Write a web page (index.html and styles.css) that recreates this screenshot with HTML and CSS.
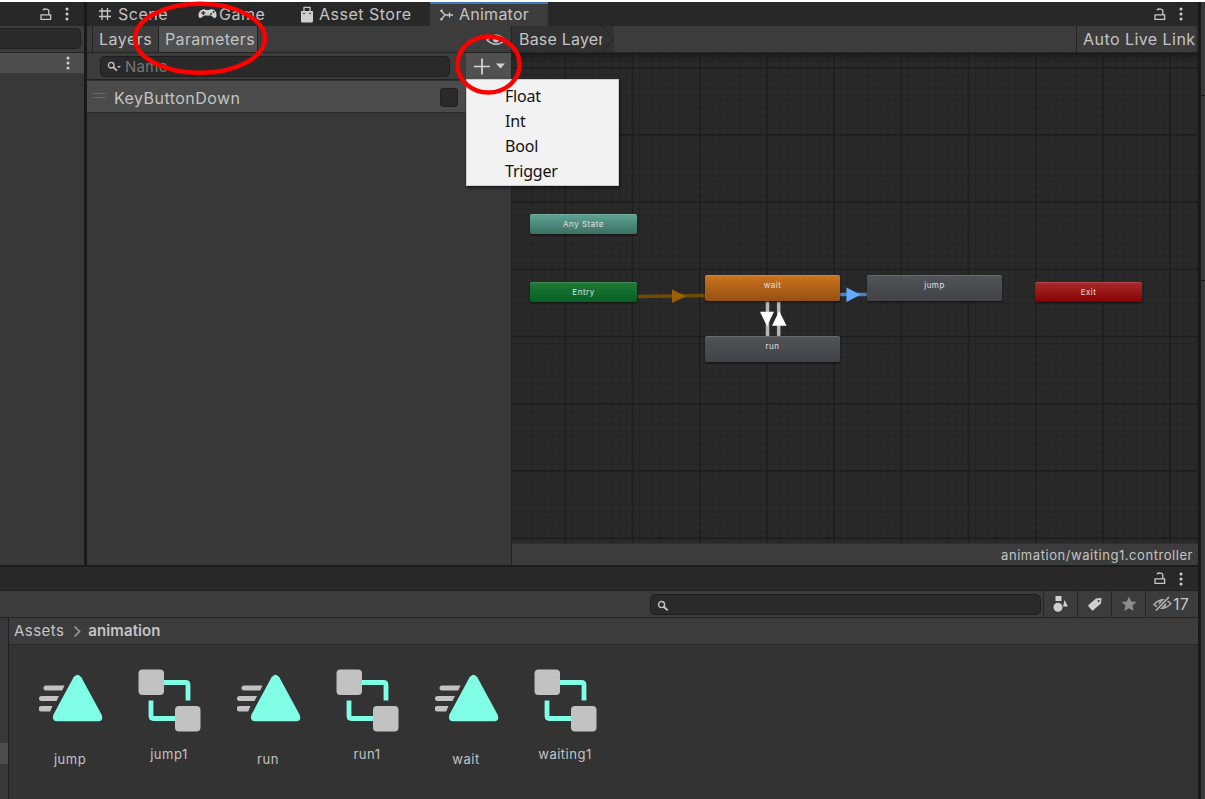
FILE: index.html
```html
<!DOCTYPE html>
<html lang="en">
<head>
<meta charset="utf-8">
<title>Animator</title>
<link rel="stylesheet" href="styles.css">
</head>
<body>
<svg class="defs" width="0" height="0">
  <defs>
    <symbol id="lock" viewBox="0 0 12 13"><path d="M1 6.8h9.6v4.6H1zM2.8 2.2C4 .8 8.8.2 8.8 3v3.8" fill="none" stroke="#c8c8c8" stroke-width="1.3"/></symbol>
    <symbol id="dots" viewBox="0 0 4 14"><circle cx="2" cy="2" r="1.5" fill="#d0d0d0"/><circle cx="2" cy="7" r="1.5" fill="#d0d0d0"/><circle cx="2" cy="12" r="1.5" fill="#d0d0d0"/></symbol>
    <symbol id="search" viewBox="0 0 12 12"><circle cx="4.2" cy="4.2" r="2.8" fill="none" stroke="#c4c4c4" stroke-width="1.3"/><path d="M6.3 6.2l3.6 3.4" stroke="#c4c4c4" stroke-width="1.8"/></symbol>
    <symbol id="clip" viewBox="0 0 64 48"><path d="M7 11.5h18.5l-2.3 5H7a2.5 2.5 0 0 1 0-5zM2.5 22h17.5l-2.5 5h-15a2.5 2.5 0 0 1 0-5zM2.5 32h11l-2.3 5.500h-8.700a2.700 2.700 0 0 1 0-5.500z" fill="#c2c2c2"/><path d="M34.600 3.300Q38.500-1.800 42.300 3.300L62.500 40.500Q65 47 59.500 47.200H18Q12.500 47 14.500 40.500z" fill="#80ffe6"/></symbol>
    <symbol id="controller" viewBox="0 0 63 63"><path d="M26 13.500h21.500q2.500 0 2.500 2.500v15.500M13 31.500v15.500q0 2.500 2.500 2.500H37" fill="none" stroke="#80ffe6" stroke-width="4.800"/><rect x="0.500" y="0.500" width="25.500" height="25.500" rx="4" fill="#c2c2c2"/><rect x="37" y="37" width="25.500" height="25.500" rx="4" fill="#c2c2c2"/></symbol>
  </defs>
</svg>
<div class="editor">
  <main class="docks">
    <section class="upper">
      <aside class="hierarchy">
        <div class="tabbar controls"><svg class="lock"><use href="#lock"/></svg><svg class="dots"><use href="#dots"/></svg></div>
        <div class="side-tools"><span class="side-field"></span></div>
        <div class="side-row"><svg class="dots"><use href="#dots"/></svg></div>
      </aside>
      <div class="animator">
        <div class="tabbar tabs">
          <div class="tab scene"><svg width="14" height="14" viewBox="0 0 14 14"><path d="M4 1v12M9.500 1v12M1 4h12M1 9.500h12" stroke="#c8c8c8" stroke-width="1.300"/></svg><span>Scene</span></div>
          <div class="tab game"><svg width="19" height="12" viewBox="0 0 19 12"><path d="M4.500 1.500q2-.8 3.500.5h3q1.500-1.300 4-.5 4 1.500 3.500 6.500-.5 3-3 1.500L13 7.500H6L3.500 9.500Q.8 11 .5 8 0 3 4.500 1.500z" fill="#d0d0d0"/><path d="M3.300 5h4M5.300 3v4" stroke="#333" stroke-width="1.300"/><circle cx="13" cy="6" r="1" fill="#333"/><circle cx="15.500" cy="4" r="1" fill="#333"/></svg><span>Game</span></div>
          <div class="tab store"><svg width="14" height="17" viewBox="0 0 14 17"><path d="M1 5h12v10q0 1.500-1.500 1.500h-9Q1 16.500 1 15z" fill="#d0d0d0"/><path d="M4 7V1.300h6V7" fill="none" stroke="#c4c4c4" stroke-width="1.300"/><path d="M2.800 7l1.200 1 1.200-1M8.800 7l1.200 1 1.200-1" fill="none" stroke="#444"/></svg><span>Asset Store</span></div>
          <div class="tab active"><svg width="14" height="12" viewBox="0 0 14 12"><path d="M1 1.500l4 4.500-4 4.500M5 6h8M9.500 3.500v5" fill="none" stroke="#c8c8c8" stroke-width="1.300"/><circle cx="1.500" cy="1.800" r="1.200" fill="#c8c8c8"/><circle cx="1.500" cy="10.200" r="1.200" fill="#c8c8c8"/></svg><span>Animator</span></div>
          <div class="controls tab-end"><svg class="lock"><use href="#lock"/></svg><svg class="dots"><use href="#dots"/></svg></div>
        </div>
        <div class="animator-body">
          <div class="params">
            <div class="param-tabs"><span class="layers">Layers</span><span class="parameters">Parameters</span>
              <svg class="eye" width="20" height="12" viewBox="0 0 20 12"><path d="M1 6Q10-3.500 19 6 10 14.500 1 6z" fill="none" stroke="#c4c4c4" stroke-width="1.500"/><circle cx="10" cy="5.500" r="3" fill="#c4c4c4"/></svg></div>
            <div class="param-search">
              <div class="name-field"><svg width="12" height="12"><use href="#search"/></svg><i></i><span>Name</span></div>
              <div class="add"><svg width="46" height="27" viewBox="0 0 46 27"><path d="M8 13.500h16M16 5.500v16" stroke="#d8d8d8" stroke-width="1.700"/><path d="M30 10.500h9l-4.500 5z" fill="#d0d0d0"/></svg></div>
            </div>
            <div class="param-row"><span class="grip"></span><span>KeyButtonDown</span><span class="check"></span></div>
          </div>
          <div class="graph">
            <div class="crumbs"><div class="crumb">Base Layer<svg width="15" height="27" viewBox="0 0 15 27"><path d="M0 0l12 13.500L0 27z" fill="#323232"/><path d="M0 0l12 13.500L0 27" fill="none" stroke="#232323"/></svg></div><div class="live">Auto Live Link</div></div>
            <div class="canvas">
              <svg class="grid" width="686" height="490" viewBox="512 53 686 490">
                <defs>
                  <pattern id="minor" x="565" y="67.500" width="6.720" height="6.720" patternUnits="userSpaceOnUse"><path d="M0 .5h6.720M.5 0v6.720" stroke="#242424" fill="none"/></pattern>
                  <pattern id="major" x="564.500" y="67" width="67.200" height="67.200" patternUnits="userSpaceOnUse"><path d="M0 .7h67.200M.7 0v67.200" stroke="#1c1c1c" stroke-width="1.400" fill="none"/></pattern>
                  <linearGradient id="shade" x2="0" y2="1"><stop offset="0" stop-color="#000" stop-opacity=".3"/><stop offset="1" stop-color="#000" stop-opacity="0"/></linearGradient>
                </defs>
                <path d="M512 53h686v490H512z" fill="#2a2a2a"/><path d="M512 53h686v490H512z" fill="url(#minor)"/><path d="M512 53h686v490H512z" fill="url(#major)"/><path d="M512 53h686v10H512z" fill="url(#shade)"/>
                <path d="M638 296.500l67-1" stroke="#704a05" stroke-width="3.500"/><path d="M672 289.500v13.500l14-6.800z" fill="#996100"/>
                <path d="M840 294.500h27" stroke="#4784c7" stroke-width="3.500"/><path d="M846.500 287.500v14.500l14-7.300z" fill="#63abff"/>
                <path d="M767.500 301v35M778.700 301v35" stroke="#b8b8b8" stroke-width="3.500"/><path d="M760 311.700h14l-7 14.500zM772 325.800h14.500L779.200 311z" fill="#fff"/>
              </svg>
              <div class="node any">Any State</div>
              <div class="node entry">Entry</div>
              <div class="node wait">wait</div>
              <div class="node run">run</div>
              <div class="node jump">jump</div>
              <div class="node exit">Exit</div>
            </div>
            <div class="status">animation/waiting1.controller</div>
          </div>
        </div>
      </div>
    </section>
    <section class="project">
      <div class="tabbar controls project-tabs"><svg class="lock"><use href="#lock"/></svg><svg class="dots"><use href="#dots"/></svg></div>
      <div class="project-tools">
        <div class="project-search"><svg width="13" height="13"><use href="#search"/></svg></div>
        <div class="tool"><svg width="18" height="18" viewBox="0 0 18 18"><path d="M3.500 1h6v5h-6zM12.500 5l3.500 6.500h-5z" fill="#d0d0d0"/><circle cx="6" cy="12.300" r="4.500" fill="#d0d0d0"/></svg></div>
        <div class="tool"><svg width="16" height="15" viewBox="0 0 16 15"><path d="M9 1.500l4.500-.5q1 0 1 1L14 6.500 6.500 13q-1 1-1.800 0L1.500 9.500q-.7-1 .2-1.800z" fill="#d0d0d0"/><circle cx="11.700" cy="4" r="1.100" fill="#3a3a3a"/></svg></div>
        <div class="tool"><svg width="16" height="16" viewBox="0 0 16 16"><path d="M8 .5l2.200 5 5.400.5-4.100 3.600 1.200 5.500L8 12.300l-4.700 2.800 1.200-5.500L.4 6l5.400-.5z" fill="#8c8c8c"/></svg></div>
        <div class="tool hidden-count"><svg width="19" height="16" viewBox="0 0 19 16"><path d="M1 8.500Q9.500-.5 18 7.500 9.500 16.500 1 8.500z" fill="none" stroke="#b0b0b0" stroke-width="1.400"/><circle cx="9.500" cy="8" r="3.800" fill="#a8a8a8"/><path d="M3 14.500L16 1" stroke="#3c3c3c" stroke-width="3.500"/><path d="M3 14.500L16 1" stroke="#b8b8b8" stroke-width="1.500"/></svg><span>17</span></div>
      </div>
      <div class="project-body">
        <div class="folders"><span></span></div>
        <div class="browser">
          <div class="path"><span>Assets</span><svg width="9" height="13" viewBox="0 0 9 13"><path d="M1.500 1.500l5 5-5 5" fill="none" stroke="#999" stroke-width="1.700"/></svg><b>animation</b></div>
          <div class="assets">
            <div class="asset"><div class="thumb"><svg class="clip"><use href="#clip"/></svg></div><span>jump</span></div>
            <div class="asset"><div class="thumb"><svg class="ctrl"><use href="#controller"/></svg></div><span>jump1</span></div>
            <div class="asset"><div class="thumb"><svg class="clip"><use href="#clip"/></svg></div><span>run</span></div>
            <div class="asset"><div class="thumb"><svg class="ctrl"><use href="#controller"/></svg></div><span>run1</span></div>
            <div class="asset"><div class="thumb"><svg class="clip"><use href="#clip"/></svg></div><span>wait</span></div>
            <div class="asset"><div class="thumb"><svg class="ctrl"><use href="#controller"/></svg></div><span>waiting1</span></div>
          </div>
        </div>
      </div>
    </section>
  </main>
  <aside class="inspector"><span></span><span></span><span></span></aside>
</div>
<div class="menu"><div>Float</div><div>Int</div><div>Bool</div><div>Trigger</div></div>
<svg class="marks" width="1205" height="110" viewBox="0 0 1205 110"><ellipse cx="200" cy="38.300" rx="65" ry="34.500"/><ellipse cx="488.500" cy="64.500" rx="31" ry="28"/></svg>
</body>
</html>
```
FILE: styles.css
```css
* { box-sizing: border-box; }
body { margin: 0; width: 1205px; height: 799px; padding-top: 2px; overflow: hidden; position: relative; background: #fff; color: #c4c4c4; font: 16px/20px Inter, "Liberation Sans", sans-serif; }
svg { display: block; flex: none; }
.defs { position: absolute; }
.editor { display: grid; grid-template-columns: 1200px 5px; height: 797px; background: #191919; }
.docks { display: grid; grid-template-rows: 563px 1fr; padding-right: 2px; }
.upper { display: grid; grid-template-columns: 84px 1fr; column-gap: 3px; min-height: 0; }
.hierarchy { background: #383838; }
.tabbar { height: 24px; background: #282828; }
.controls { display: flex; align-items: center; justify-content: flex-end; gap: 13px; padding-right: 15px; }
.lock { width: 12px; height: 13px; }
.dots { width: 4px; height: 14px; }
.side-tools { height: 27px; padding: 2px 3px 3px 0; background: #3c3c3c; border-bottom: 1px solid #232323; }
.side-field { display: block; height: 21px; background: #2a2a2a; border: 1px solid #202020; border-left: 0; border-radius: 0 5px 5px 0; }
.side-row { display: flex; justify-content: flex-end; align-items: center; height: 20px; padding-right: 14px; background: #4d4d4d; }
.animator { display: grid; grid-template-rows: 24px 1fr; min-height: 0; min-width: 0; }
.tabs { display: flex; letter-spacing: .5px; }
.tab { display: flex; align-items: center; }
.scene { width: 111px; padding-left: 11px; gap: 6px; }
.game { width: 101px; gap: 2px; }
.store { width: 131px; padding-left: 1px; gap: 5px; }
.active { width: 118px; margin-left: 0; padding-left: 10px; gap: 5px; background: #3c3c3c; border-top: 2px solid #3a79bb; letter-spacing: .25px; }
.active span { margin-top: -2px; }
.tab-end { margin-left: auto; }
.animator-body { display: grid; grid-template-columns: 425px 1fr; min-height: 0; }
.params { background: #383838; border-right: 1px solid #232323; }
.param-tabs { display: flex; height: 27px; padding-left: 5px; background: #3c3c3c; border-bottom: 1px solid #232323; line-height: 27px; }
.layers { width: 67px; padding-left: 6px; border-left: 1px solid #232323; border-right: 1px solid #232323; letter-spacing: .5px; }
.parameters { width: 99px; padding-left: 6px; background: #505050; border-right: 1px solid #232323; letter-spacing: .35px; }
.eye { margin: 8px 5px 0 auto; }
.param-search { display: flex; height: 27px; padding-left: 13px; background: #3c3c3c; border-bottom: 1px solid #232323; }
.name-field { display: flex; align-items: center; width: 350px; height: 21px; margin: 3px 16px 0 0; padding-left: 6px; background: #2a2a2a; border: 1px solid #1e1e1e; border-radius: 5px; color: #777; font-size: 15px; letter-spacing: .3px; }
.name-field i { border: 2px solid transparent; border-top-color: #c4c4c4; border-bottom: 0; margin-left: -2px; }
.name-field span { margin-left: 4px; }
.add { width: 45px; height: 27px; background: #505050; }
.param-row { display: flex; align-items: center; height: 33px; padding: 2px 53px 0 6px; background: #4b4b4b; border-top: 1px solid #303030; border-bottom: 1px solid #2a2a2a; letter-spacing: .45px; }
.grip { width: 13px; height: 5px; margin: -4px 8px 0 0; border: 1px solid #666; border-width: 1px 0; }
.check { width: 18px; height: 19px; margin-left: auto; background: #2a2a2a; border: 1px solid #202020; border-radius: 3px; }
.graph { display: grid; grid-template-rows: 27px 490px 22px; min-width: 0; }
.crumbs { display: flex; justify-content: space-between; background: #3c3c3c; border-bottom: 1px solid #232323; line-height: 26px; }
.crumb { display: flex; width: 115px; height: 26px; padding-left: 7px; background: linear-gradient(90deg, #323232 102px, transparent 102px); white-space: nowrap; letter-spacing: .2px; }
.crumb svg { height: 26px; margin-left: -3px; }
.live { width: 122px; padding-left: 6px; border-left: 1px solid #232323; border-right: 2px solid #303030; letter-spacing: .45px; white-space: nowrap; }
.canvas { position: relative; overflow: hidden; }
.node { position: absolute; width: 107px; height: 20px; border-radius: 2px; box-shadow: 0 1px 2px #111, inset 0 1px #ffffff25; color: #e0e0e0; font-size: 8px; line-height: 20px; text-align: center; letter-spacing: .5px; }
.any { left: 18px; top: 161px; background: linear-gradient(#5fa494, #3b7065); }
.entry { left: 18px; top: 229px; background: linear-gradient(#207a37, #056022); }
.wait, .run, .jump { width: 135px; height: 26px; }
.wait { left: 193px; top: 222px; background: linear-gradient(#cc731e, #955010); }
.run { left: 193px; top: 283px; background: linear-gradient(#505357, #434347); }
.jump { left: 355px; top: 222px; background: linear-gradient(#505357, #434347); }
.exit { left: 523px; top: 229px; background: linear-gradient(#a82b2b, #8a0000); }
.status { padding-right: 5px; background: #3c3c3c; border-top: 1px solid #303030; font-size: 13px; line-height: 23px; text-align: right; letter-spacing: .55px; }
.project { display: grid; grid-template-rows: 26px 27px 1fr; min-height: 0; }
.project-tabs { height: 26px; border-top: 2px solid #1b1b1b; border-bottom: 1px solid #202020; }
.project-tools { display: flex; justify-content: flex-end; background: #3c3c3c; border-bottom: 1px solid #232323; }
.project-search { width: 391px; height: 21px; margin: 3px 2px 0 0; padding: 5px 6px; background: #2a2a2a; border: 1px solid #1e1e1e; border-radius: 5px; }
.tool { display: flex; justify-content: center; align-items: center; width: 34px; border-left: 1px solid #262626; }
.hidden-count { width: 53px; justify-content: flex-start; padding-left: 7px; gap: 1px; letter-spacing: .3px; }
.project-body { display: grid; grid-template-columns: 9px 1fr; min-height: 0; }
.folders { background: #383838; border-right: 1px solid #202020; padding-top: 125px; }
.folders span { display: block; height: 21px; background: #4d4d4d; }
.browser { background: #333; }
.path { display: flex; align-items: center; height: 27px; padding-left: 5px; background: #3c3c3c; border-bottom: 1px solid #292929; font-size: 15px; letter-spacing: .45px; }
.path svg { margin: 0 6px 0 9px; }
.path b { font-weight: 600; letter-spacing: .1px; }
.assets { display: flex; gap: 9px; padding: 24px 0 0 16px; }
.asset { width: 90px; text-align: center; font-size: 13px; letter-spacing: .5px; }
.thumb { height: 65px; margin-bottom: 10px; padding-left: 14px; }
.clip { width: 64px; height: 48px; margin-top: 5px; }
.ctrl { width: 63px; height: 63px; }
.inspector { display: grid; grid-template-rows: 93px 184px 1fr; row-gap: 1px; padding-left: 1px; }
.inspector span { background: #383838; }
.menu { position: absolute; left: 466px; top: 79px; width: 153px; height: 107px; padding: 4px 0 0 38px; background: #f2f2f2; border: 1px solid #ccc; box-shadow: 1px 2px 3px #0008; color: #111; font: 16px/25px "Noto Sans", "Open Sans", sans-serif; letter-spacing: -.2px; }
.marks { position: absolute; left: 0; top: 0; fill: none; stroke: #f00; stroke-width: 4.500; }
```
